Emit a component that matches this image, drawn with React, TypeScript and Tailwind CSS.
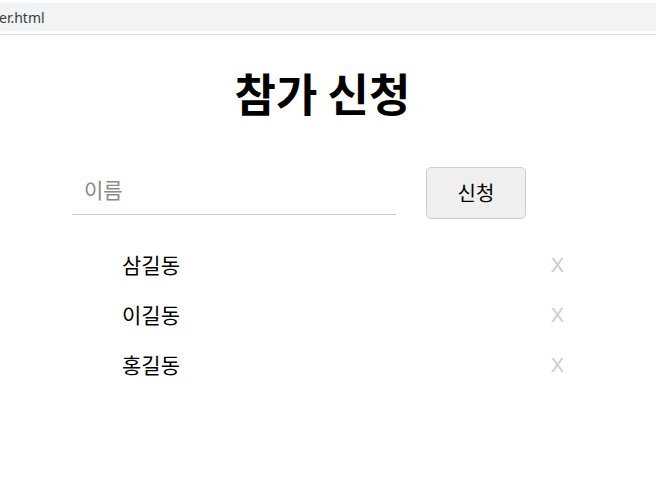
import React, { useState } from 'react';

const font = { fontFamily: '"Malgun Gothic", "Noto Sans CJK KR", "Noto Sans", sans-serif' };

export default function App() {
    const [name, setName] = useState('');
    const [people, setPeople] = useState(['삼길동', '이길동', '홍길동']);

    const handleAdd = () => {
        if (!name.trim()) return;
        setPeople([...people, name.trim()]);
        setName('');
    };

    return (
        <div className="w-[656px] h-[486px] bg-white overflow-hidden" style={font}>
            {/* browser address bar strip */}
            <div className="pt-[3px] h-[35px] border-b border-[#dadce0]">
                <div className="h-[28px] bg-[#f1f3f4] flex items-center text-[14px] text-[#3c3c3c] -ml-[1px] font-['Noto_Sans',sans-serif]">
                    er.html
                </div>
            </div>

            <h1 className="mt-[28px] pr-[11px] text-center text-[45px] font-bold leading-[60px] text-black">참가 신청</h1>

            <div className="mt-[45px] ml-[72px] flex items-start">
                <input
                    value={name}
                    onChange={(e) => setName(e.target.value)}
                    placeholder="이름"
                    className="w-[324px] h-[47px] px-[12px] pb-[5px] text-[21px] border-b border-[#c8c8c8] outline-none placeholder:text-[#8a8a8a]"
                />
                <button
                    onClick={handleAdd}
                    className="ml-[30px] -mt-[1px] w-[100px] h-[52px] rounded-[5px] border border-[#cfcfcf] bg-[#efefef] text-[20px] text-black"
                >
                    신청
                </button>
            </div>

            <ul className="mt-[21px] ml-[122px] w-[442px]">
                {people.map((p, i) => (
                    <li key={i} className="h-[50px] flex items-center justify-between text-[21px] text-black">
                        <span>{p}</span>
                        <button
                            onClick={() => setPeople(people.filter((_, j) => j !== i))}
                            className="text-[20px] text-[#cccccc] font-['Liberation_Sans',sans-serif]"
                        >
                            X
                        </button>
                    </li>
                ))}
            </ul>
        </div>
    );
}
